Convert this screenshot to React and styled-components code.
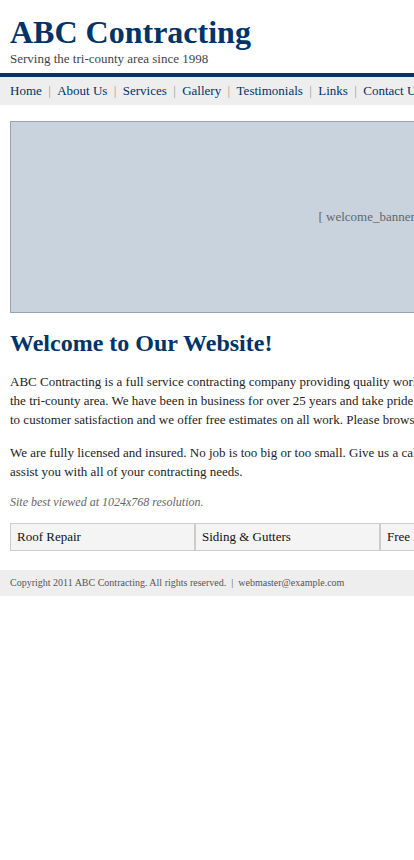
import React from 'react';
import styled, { createGlobalStyle } from 'styled-components';

const navLinks = [
  'Home',
  'About Us',
  'Services',
  'Gallery',
  'Testimonials',
  'Links',
  'Contact Us',
];

const features = [
  'Roof Repair',
  'Siding & Gutters',
  'Free Estimates',
  'Licensed & Insured',
];

const GlobalStyle = createGlobalStyle`
  html, body {
    margin: 0;
    padding: 0;
    background: #ffffff;
    overflow-x: hidden;
  }
  body {
    font-family: "Liberation Serif", "Times New Roman", serif;
    font-size: 13px;
    color: #222222;
  }
`;

const Page = styled.div`
  width: 760px;
`;

const Header = styled.header`
  padding: 14px 10px 7px;
  border-bottom: 4px solid #003366;
`;

const Title = styled.h1`
  margin: 0;
  font-size: 32px;
  font-weight: bold;
  color: #003366;
  line-height: 37px;
`;

const Tagline = styled.div`
  font-size: 13px;
  color: #444444;
  line-height: 15px;
`;

const Nav = styled.nav`
  display: flex;
  align-items: center;
  height: 28px;
  padding: 0 10px;
  background: #eeeeee;
  white-space: nowrap;
`;

const NavLink = styled.a`
  color: #003366;
  text-decoration: none;
  font-size: 13px;
`;

const Sep = styled.span`
  color: #999999;
  margin: 0 6.4px;
`;

const Main = styled.main`
  padding: 16px 10px 0;
`;

const Banner = styled.div`
  height: 190px;
  display: flex;
  align-items: center;
  justify-content: center;
  background: #c8d3de;
  border: 1px solid #99a3ae;
  color: #666666;
  font-size: 13px;
`;

const Heading = styled.h2`
  margin: 16px 0 15px;
  font-size: 24px;
  font-weight: bold;
  color: #003366;
  line-height: 28px;
`;

const Para = styled.p`
  margin: 0 0 14px;
  line-height: 19px;
`;

const Note = styled.p`
  margin: 0 0 14px;
  font-size: 12px;
  font-style: italic;
  color: #666666;
  line-height: 14px;
`;

const Features = styled.div`
  display: grid;
  grid-template-columns: repeat(4, 1fr);
  margin-bottom: 19px;
`;

const Feature = styled.div`
  padding: 5px 6px;
  background: #f4f4f4;
  border: 1px solid #cccccc;
  line-height: 16px;
  color: #111111;
`;

const Footer = styled.footer`
  padding: 5px 10px;
  background: #eeeeee;
  color: #555555;
  font-size: 10px;
  line-height: 16px;
`;

export default function App() {
  return (
    <Page>
      <GlobalStyle />
      <Header>
        <Title>ABC Contracting</Title>
        <Tagline>Serving the tri-county area since 1998</Tagline>
      </Header>
      <Nav>
        {navLinks.map((link, i) => (
          <React.Fragment key={link}>
            {i > 0 && <Sep>|</Sep>}
            <NavLink href="#">{link}</NavLink>
          </React.Fragment>
        ))}
      </Nav>
      <Main>
        <Banner>[ welcome_banner.jpg ]</Banner>
        <Heading>Welcome to Our Website!</Heading>
        <Para>
          ABC Contracting is a full service contracting company providing
          quality workmanship to residential and commercial customers
          throughout the tri-county area. We have been in business for over
          25 years and take pride in every job we do, no matter the size. We
          are fully committed to customer satisfaction and we offer free
          estimates on all work. Please browse our site to learn more about
          our services.
        </Para>
        <Para>
          We are fully licensed and insured. No job is too big or too small.
          Give us a call today and our experienced staff will be more than
          happy to assist you with all of your contracting needs.
        </Para>
        <Note>Site best viewed at 1024x768 resolution.</Note>
        <Features>
          {features.map(f => (
            <Feature key={f}>{f}</Feature>
          ))}
        </Features>
      </Main>
      <Footer>
        Copyright 2011 ABC Contracting. All rights reserved. &nbsp;|&nbsp;
        webmaster@example.com
      </Footer>
    </Page>
  );
}
